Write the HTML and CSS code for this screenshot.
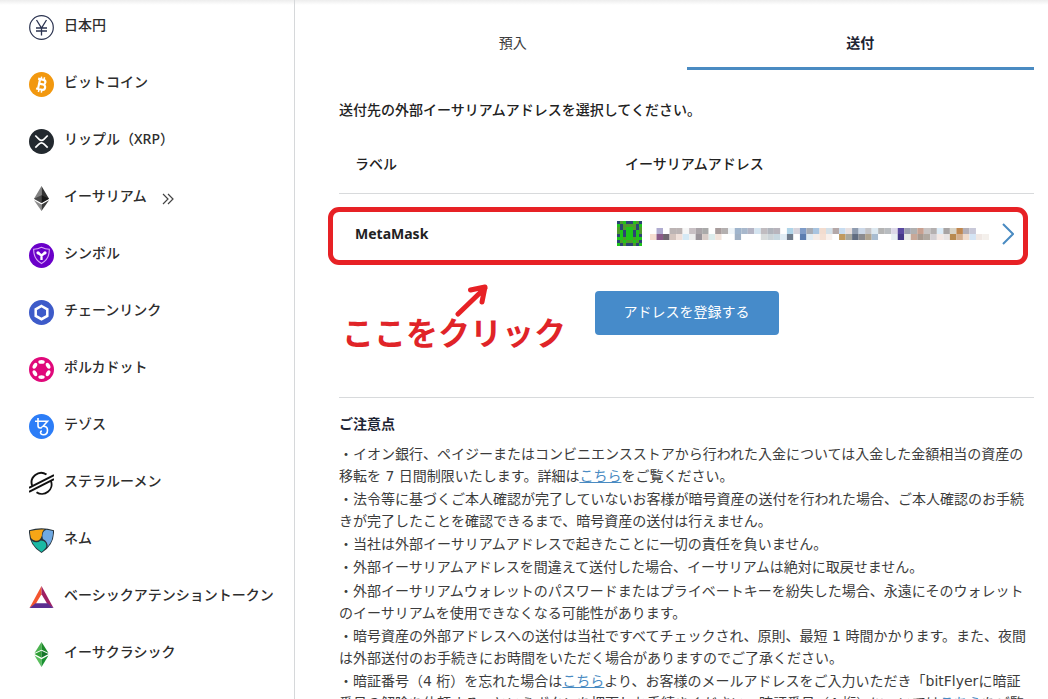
FILE: index.html
```html
<!DOCTYPE html>
<html lang="ja">
<head>
<meta charset="utf-8">
<meta name="viewport" content="width=device-width, initial-scale=1">
<title>送付先の選択</title>
<link rel="stylesheet" href="styles.css">
</head>
<body>
<div class="page">
  <nav class="sidebar" aria-label="通貨">
    <a class="coin" href="#jpy">
      <svg class="coin-icon" viewBox="0 0 25 25"><circle cx="12.500" cy="12.500" r="11.800" fill="#fff" stroke="#2b3350" stroke-width="1.200"/><path d="M7.500 5l5 8 5-8M12.500 13v7.500M7 13h11M7 16h11" fill="none" stroke="#2b3350" stroke-width="1.300"/></svg>
      <span>日本円</span>
    </a>
    <a class="coin" href="#btc">
      <svg class="coin-icon" viewBox="0 0 25 25"><circle cx="12.500" cy="12.500" r="12.500" fill="#f2980f"/><g transform="rotate(12 12.500 12.500)" fill="none" stroke="#fff"><path d="M8 7.500h5.500a2.300 2.300 0 0 1 0 4.700h-3.500M10 12.200h4a2.600 2.600 0 0 1 0 5.300H8M10 7.500v10" stroke-width="2.200"/><path d="M11 4.800v3M14 4.800v3M11 17.500v3M14 17.500v3" stroke-width="1.500"/></g></svg>
      <span>ビットコイン</span>
    </a>
    <a class="coin" href="#xrp">
      <svg class="coin-icon" viewBox="0 0 25 25"><circle cx="12.500" cy="12.500" r="12.500" fill="#23292f"/><path d="M6.300 6.500l3.600 3.600q2.600 2.500 5.200 0l3.600-3.600M6.300 18.700l3.600-3.600q2.600-2.500 5.200 0l3.600 3.600" fill="none" stroke="#fff" stroke-width="1.700"/></svg>
      <span>リップル（XRP）</span>
    </a>
    <a class="coin" href="#eth" aria-current="page">
      <svg class="coin-icon" viewBox="0 0 25 25"><path d="M12.500 0L5 12.700l7.500 4.400z" fill="#828282"/><path d="M12.500 0L20 12.700l-7.500 4.400z" fill="#343434"/><path d="M12.500 9.300L5 12.700l7.500 4.400z" fill="#4a4a4a"/><path d="M12.500 9.300l7.500 3.400-7.500 4.400z" fill="#181818"/><path d="M5 14.200l7.500 4.400V25z" fill="#8c8c8c"/><path d="M20 14.200l-7.500 4.400V25z" fill="#3c3c3b"/></svg>
      <span>イーサリアム</span>
      <svg class="coin-more" viewBox="0 0 12 12"><path d="M1 1l5 5-5 5M6 1l5 5-5 5" fill="none" stroke="#444" stroke-width="1.200"/></svg>
    </a>
    <a class="coin" href="#xym">
      <svg class="coin-icon" viewBox="0 0 25 25"><circle cx="12.500" cy="12.500" r="12.500" fill="#6a00c9"/><path d="M12.500 4.300q4 1.900 7.800 1.900.4 9.700-7.800 14.300-8.200-4.600-7.800-14.300 3.800 0 7.800-1.900z" fill="none" stroke="#d9a6f7" stroke-width="1.100"/><path d="M12.500 12v5M12.500 12.500L9.200 10M12.500 12.500l3.300-2.500" fill="none" stroke="#fff" stroke-width="2.300"/><circle cx="9" cy="9.800" r="1.600" fill="#fff"/><circle cx="16" cy="9.800" r="1.600" fill="#fff"/></svg>
      <span>シンボル</span>
    </a>
    <a class="coin" href="#link">
      <svg class="coin-icon" viewBox="0 0 25 25"><circle cx="12.500" cy="12.500" r="12.500" fill="#3d5bc9"/><path d="M12.500 6l5.800 3.300v6.600l-5.800 3.300-5.800-3.300V9.300z" fill="none" stroke="#fff" stroke-width="2.500"/></svg>
      <span>チェーンリンク</span>
    </a>
    <a class="coin" href="#dot">
      <svg class="coin-icon" viewBox="0 0 25 25"><circle cx="12.500" cy="12.500" r="12.500" fill="#e0087a"/><g fill="#fff"><ellipse cx="12.500" cy="4.900" rx="3.200" ry="1.900"/><ellipse cx="12.500" cy="20.100" rx="3.200" ry="1.900"/><ellipse cx="5.900" cy="8.700" rx="3.200" ry="1.900" transform="rotate(-60 5.900 8.700)"/><ellipse cx="19.100" cy="16.300" rx="3.200" ry="1.900" transform="rotate(-60 19.100 16.300)"/><ellipse cx="5.900" cy="16.300" rx="3.200" ry="1.900" transform="rotate(60 5.900 16.300)"/><ellipse cx="19.100" cy="8.700" rx="3.200" ry="1.900" transform="rotate(60 19.100 8.700)"/></g></svg>
      <span>ポルカドット</span>
    </a>
    <a class="coin" href="#xtz">
      <svg class="coin-icon" viewBox="0 0 25 25"><circle cx="12.500" cy="12.500" r="12.500" fill="#2c7df7"/><path d="M9 4v7.600q0 2.400 2.200 2.400 1.400 0 1.800-1.300M6 7.200h12.500L14 12.300q4.500-.2 4.500 4 0 4.500-4 4.500-2.800 0-3-2.300 0-1.500 1.500-1.500" fill="none" stroke="#fff" stroke-width="1.600"/></svg>
      <span>テゾス</span>
    </a>
    <a class="coin" href="#xlm">
      <svg class="coin-icon" viewBox="0 0 25 25"><g fill="none" stroke="#111" stroke-width="1.900"><path d="M3.200 14.800A9.600 9.600 0 0 1 17.500 3.500M21.900 9.800A9.600 9.600 0 0 1 7.500 21.200"/><path d="M0 16.800L25 4.100M0 20.800L25 8.100"/></g></svg>
      <span>ステラルーメン</span>
    </a>
    <a class="coin" href="#xem">
      <svg class="coin-icon" viewBox="0 0 25 25"><path d="M0 2.200Q12.500-1.600 25 2.200 25.600 17 12.500 25-.6 17 0 2.200z" fill="#27333b"/><path d="M1 3.100q7.500-2.200 14.500-1.500-2.800 2-2.600 5.800-1.800 6-6.400 5.300-3-.4-4.500-2.700Q.9 6.500 1 3.100z" fill="#f7a616"/><path d="M17.300 1.800q3.500.3 6.700 1.300.5 9-5.500 16 .8-5.300-4.600-8.200-1.800-7 3.400-9.100z" fill="#6fa9e3"/><path d="M2.500 12.500q4.800 3.700 9.300 0 6 .6 5.500 6-.3 2-4.800 5.400-7.300-4.700-10-11.400z" fill="#1bb9a4"/></svg>
      <span>ネム</span>
    </a>
    <a class="coin" href="#bat">
      <svg class="coin-icon" viewBox="0 0 25 25"><path d="M12.500 1L.5 23l6-3.700 6-10z" fill="#f4552f"/><path d="M12.500 1l12 22-6-3.700-6-10z" fill="#9e1f63"/><path d="M.5 23h24l-6-4.700h-12z" fill="#5b2d8f"/></svg>
      <span>ベーシックアテンショントークン</span>
    </a>
    <a class="coin" href="#etc">
      <svg class="coin-icon" viewBox="0 0 25 25"><path d="M12.500 0L5.500 11l7-3.200z" fill="#4cb350"/><path d="M12.500 0l7 11-7-3.200z" fill="#1c8a2a"/><path d="M12.500 8.800L5.500 12l7 3.800z" fill="#2f9e35"/><path d="M12.500 8.800l7 3.200-7 3.800z" fill="#14752a"/><path d="M5.500 13.500l7 3.700V25z" fill="#5abf5e"/><path d="M19.500 13.500l-7 3.700V25z" fill="#1a9232"/></svg>
      <span>イーサクラシック</span>
    </a>
  </nav>

  <main class="main">
    <div class="tabs" role="tablist">
      <button class="tab" type="button" role="tab" aria-selected="false">預入</button>
      <button class="tab tab-active" type="button" role="tab" aria-selected="true">送付</button>
    </div>

    <p class="prompt">送付先の外部イーサリアムアドレスを選択してください。</p>

    <div class="address-area">
      <table class="addresses">
        <thead>
          <tr><th class="label-col" scope="col">ラベル</th><th class="address-head" scope="col">イーサリアムアドレス</th></tr>
        </thead>
        <tbody>
          <tr>
            <td class="label-col">MetaMask</td>
            <td>
              <div class="address">
                <svg class="identicon" viewBox="0 0 8 8" preserveAspectRatio="none" shape-rendering="crispEdges"></svg>
                <svg class="mosaic" viewBox="0 0 52 2" preserveAspectRatio="none" role="img" aria-label="非表示のアドレス"></svg>
                <button class="open" type="button" aria-label="選択">
                  <svg class="chevron" viewBox="0 0 12 22"><path d="M1 1l10 10L1 21" fill="none" stroke="#4a8bc2" stroke-width="2"/></svg>
                </button>
              </div>
            </td>
          </tr>
        </tbody>
      </table>
      <div class="highlight"></div>
      <div class="callout">
        <svg class="arrow" viewBox="0 0 34 34"><path d="M3 31L30 5M15.500 7L30 4l-3 15" fill="none" stroke="#e72125" stroke-width="5" stroke-linecap="round" stroke-linejoin="round"/></svg>
        <span class="callout-text">ここをクリック</span>
      </div>
    </div>

    <div class="actions"><button class="register" type="button">アドレスを登録する</button></div>

    <section class="notes">
      <h2 class="notes-title">ご注意点</h2>
      <p class="note">・イオン銀行、ペイジーまたはコンビニエンスストアから行われた入金については入金した金額相当の資産の移転を 7 日間制限いたします。詳細は<a href="#limit">こちら</a>をご覧ください。</p>
      <p class="note">・法令等に基づくご本人確認が完了していないお客様が暗号資産の送付を行われた場合、ご本人確認のお手続きが完了したことを確認できるまで、暗号資産の送付は行えません。</p>
      <p class="note">・当社は外部イーサリアムアドレスで起きたことに一切の責任を負いません。</p>
      <p class="note">・外部イーサリアムアドレスを間違えて送付した場合、イーサリアムは絶対に取戻せません。</p>
      <p class="note note-spaced">・外部イーサリアムウォレットのパスワードまたはプライベートキーを紛失した場合、永遠にそのウォレットのイーサリアムを使用できなくなる可能性があります。</p>
      <p class="note">・暗号資産の外部アドレスへの送付は当社ですべてチェックされ、原則、最短 1 時間かかります。また、夜間は外部送付のお手続きにお時間をいただく場合がありますのでご了承ください。</p>
      <p class="note">・暗証番号（4 桁）を忘れた場合は<a href="#reset">こちら</a>より、お客様のメールアドレスをご入力いただき「bitFlyerに暗証<br>番号の解除を依頼する」というボタンを押下しお手続きください。暗証番号（4 桁）については<a href="#pin">こちら</a>をご覧</p>
    </section>
  </main>
</div>
<script src="script.js"></script>
</body>
</html>
```

FILE: styles.css
```css
* {
  box-sizing: border-box;
}

body {
  margin: 0;
  background: #fff;
  color: #3c3c3c;
  font-family: "Noto Sans", "Noto Sans CJK JP", sans-serif;
  font-size: 14px;
  line-height: 22px;
}

button {
  border: 0;
  background: none;
  color: inherit;
  font: inherit;
  cursor: pointer;
}

.page {
  display: flex;
  height: 100vh;
  overflow: hidden;
  background: linear-gradient(#ededed, #fff) no-repeat 0 0 / 100% 5px;
}

.sidebar {
  flex: 0 0 295px;
  border-right: 1px solid #d6d8da;
}

.coin {
  display: flex;
  align-items: flex-start;
  height: 57px;
  padding: 15px 0 0 29px;
  color: #2d2d2d;
  font-weight: 500;
  text-decoration: none;
}

.coin span {
  margin-top: -1px;
}

.coin-icon {
  width: 25px;
  height: 25px;
  margin-right: 10px;
}

.coin-more {
  width: 12px;
  height: 12px;
  margin: 7px 0 0 15px;
}

.main {
  flex: 1;
  min-width: 0;
  padding: 19px 14px 0 44px;
}

.tabs {
  display: grid;
  grid-template-columns: 1fr 1fr;
}

.tab {
  height: 51px;
  padding: 0 0 1px;
  border-bottom: 3px solid transparent;
}

.tab-active {
  border-color: #4a8bc2;
  color: #1e2433;
  font-weight: 700;
}

.prompt {
  margin: 29px 0 25px;
  color: #222;
  font-weight: 500;
}

.address-area {
  position: relative;
}

.addresses {
  width: 100%;
  border-collapse: collapse;
  table-layout: fixed;
  color: #222;
}

.addresses th {
  padding: 7px 0 18px;
  border-bottom: 1px solid #d8dadc;
  font-weight: 500;
  text-align: left;
}

.addresses td {
  height: 80px;
  padding: 0;
  font-weight: 700;
}

.addresses .label-col {
  width: 40%;
  padding-left: 16px;
}

.addresses .address-head {
  padding-left: 8px;
}

.address {
  display: flex;
  align-items: center;
}

.identicon {
  width: 25px;
  height: 25px;
  margin-right: 8px;
}

.mosaic {
  flex: 1;
  min-width: 0;
  height: 12px;
}

.open {
  display: flex;
  width: 45px;
  padding: 0 0 0 13px;
}

.chevron {
  width: 12px;
  height: 22px;
}

.highlight {
  position: absolute;
  top: 61px;
  right: 6px;
  left: -11px;
  height: 58px;
  border: 5px solid #e72125;
  border-radius: 11px;
  pointer-events: none;
}

.callout {
  position: absolute;
  top: 137px;
  left: 3px;
  display: flex;
  flex-direction: column;
  align-items: center;
  color: #e02428;
}

.arrow {
  width: 34px;
  height: 34px;
  margin-left: 36px;
}

.callout-text {
  font-size: 32px;
  font-weight: 700;
  line-height: 32px;
}

.actions {
  display: flex;
  justify-content: center;
  padding: 17px 0 62px;
}

.register {
  width: 184px;
  height: 44px;
  padding: 0 0 2px;
  border-radius: 4px;
  background: #468bca;
  color: #fff;
}

.notes {
  padding-top: 15px;
  border-top: 1px solid #d8dadc;
  font-family: "DejaVu Sans", "Noto Sans CJK JP", sans-serif;
}

.notes-title {
  margin: 0 0 8px;
  color: #1e2433;
  font-size: 14px;
  font-weight: 700;
}

.note {
  margin: 0 0 1px;
}

.note-spaced {
  margin-top: 2px;
}

.note a {
  color: #4a8bc2;
}
```

FILE: script.js
```js
const svgNs = "http://www.w3.org/2000/svg";

function drawCells(svg, rows, size) {
  rows.forEach((row, y) => {
    row.forEach((color, x) => {
      const cell = document.createElementNS(svgNs, "rect");
      cell.setAttribute("x", x);
      cell.setAttribute("y", y);
      cell.setAttribute("width", size);
      cell.setAttribute("height", size);
      cell.setAttribute("fill", color);
      svg.appendChild(cell);
    });
  });
}

// One letter per cell of the left half; the right half mirrors it.
const palette = { n: "#2b4373", g: "#1fc41a", o: "#4f9a2c" };
const half = ["nogn", "gnoo", "onog", "ognG", "ngng", "ggog", "nogo", "gnon"];
drawCells(
  document.querySelector(".identicon"),
  half.map((r) => [...r, ...[...r].reverse()].map((c) => palette[c.toLowerCase()])),
  1
);

const upper = "fff b0acd0 fff bcb4b4 bcb4b4 f6f6f6 c8c0c4 aaa4a8 aaaaaa fff a89c9c b4b0b0 eef4f8 9fb4cc a8b8cc b4b4c4 d4e4f0 c0bcc0 b0b4bc b8b4bc fff b0d4e8 d8d4dc 7f9cc8 a8acb4 a8c4e0 f2dccf d4e0e8 b4a8a8 c8dcf0 e8e0e0 8f9cb0 ccd8e8 c4c4c8 dce8f0 b4b4b4 b8bcc0 dcd8e8 5848a0 9ca0b0 b0b0b0 c8a090 c8c4c4 b4b0b0 dcecf8 a8a4a4 d8d4c8 c08850 b4b0b8 c8c8d8 fff fff";
const lower = "f5ddd0 8a5a88 6f666f d4c4be f0e0da d5e9f5 eeeeee 9a949a d8ccc8 dcecec f2e4dc fff fff 9fb0c4 fff fff fff d8dcdc ccd4d8 c8d8e0 e0ecf4 707c8c fff 5b7db0 e0ecf4 f4ece8 f4e0d4 f8f0ec fff c09a60 a8a8a0 606c80 8c8c90 b0a490 a8bcd0 fff fff e8f0f4 443888 e8ece8 c8a898 a89a90 b0a8a0 d4d0d4 f4e8e4 e8e4e4 b88a50 d4b090 f0dccc d4e4f4 f0e8e4 f4f0ec";
drawCells(
  document.querySelector(".mosaic"),
  [upper, lower].map((r) => r.split(" ").map((c) => "#" + c)),
  1
);
```
